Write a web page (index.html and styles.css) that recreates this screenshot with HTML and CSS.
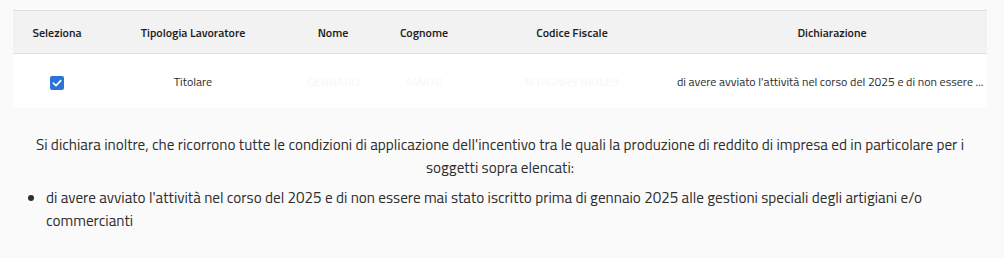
FILE: index.html
```html
<!DOCTYPE html>
<html lang="it">
<head>
<meta charset="utf-8">
<link rel="stylesheet" href="styles.css">
</head>
<body>
<div class="page">
  <table class="grid">
    <colgroup>
      <col class="c1"><col class="c2"><col class="c3"><col class="c4"><col class="c5"><col class="c6">
    </colgroup>
    <thead>
      <tr>
        <th>Seleziona</th>
        <th>Tipologia Lavoratore</th>
        <th>Nome</th>
        <th>Cognome</th>
        <th>Codice Fiscale</th>
        <th>Dichiarazione</th>
      </tr>
    </thead>
    <tbody>
      <tr>
        <td><span class="check"><svg viewBox="0 0 14 14" width="14" height="14"><path d="M3.3 7.2 L6 9.6 L10.8 4.6" fill="none" stroke="#fff" stroke-width="1.6" stroke-linecap="round" stroke-linejoin="round"/></svg></span></td>
        <td>Titolare</td>
        <td class="hidden">GENNARO</td>
        <td class="hidden">AMATO</td>
        <td class="hidden">MTAGNR93R04B9</td>
        <td class="trunc">di avere avviato l'attività nel corso del 2025 e di non essere ...</td>
      </tr>
    </tbody>
  </table>
  <p class="intro">Si dichiara inoltre, che ricorrono tutte le condizioni di applicazione dell'incentivo tra le quali la produzione di reddito di impresa ed in particolare per i soggetti sopra elencati:</p>
  <ul class="list">
    <li>di avere avviato l'attività nel corso del 2025 e di non essere mai stato iscritto prima di gennaio 2025 alle gestioni speciali degli artigiani e/o commercianti</li>
  </ul>
</div>
</body>
</html>
```
FILE: styles.css
```css
html, body {
  margin: 0;
  padding: 0;
  background: #fafafa;
}
body {
  font-family: "Titillium Web", Lato, "Open Sans", sans-serif;
  color: #333;
}
.page {
  width: 1004px;
  height: 258px;
  padding: 10px 17px 0 13px;
  box-sizing: border-box;
}
.grid {
  width: 974px;
  border-collapse: collapse;
  table-layout: fixed;
  font-size: 12px;
}
.c1 { width: 88px; }
.c2 { width: 184px; }
.c3 { width: 96px; }
.c4 { width: 86px; }
.c5 { width: 210px; }
.c6 { width: 310px; }
.grid th {
  background: #f2f2f2;
  border-top: 1px solid #dde1e6;
  border-bottom: 1px solid #dde1e6;
  height: 42px;
  padding: 0 4px;
  font-weight: 600;
  color: #1e1e1e;
  text-align: center;
}
.grid td {
  background: #fff;
  height: 54px;
  padding: 0 4px;
  text-align: center;
  color: #2b2b2b;
}
.grid td.hidden {
  color: #f7f7f7;
}
.grid td.trunc {
  white-space: nowrap;
  overflow: hidden;
  padding: 0 4px 0 0;
}
.check {
  display: inline-flex;
  width: 14px;
  height: 14px;
  border-radius: 2px;
  background: #2c73d6;
  vertical-align: middle;
}
.intro {
  margin: 25px 0 0 0;
  padding: 0 12px;
  text-align: center;
  font-size: 15.2px;
  line-height: 23px;
  color: #2e2e2e;
}
.list {
  margin: 7px 0 0 0;
  padding: 0 0 0 33px;
  font-size: 15.2px;
  line-height: 23px;
  color: #2e2e2e;
}
```
